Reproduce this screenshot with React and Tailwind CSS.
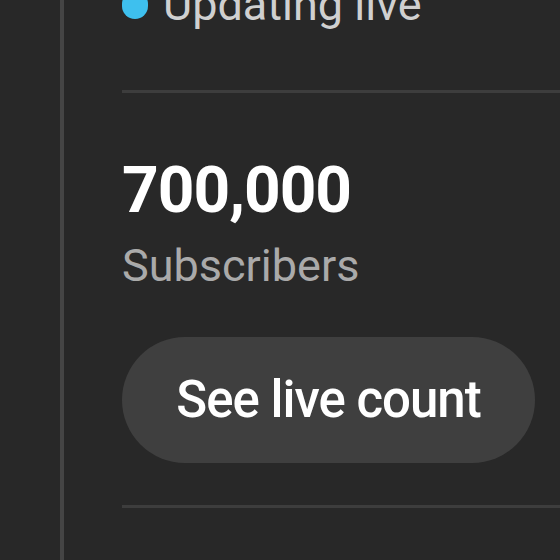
import React from "react";

export default function App() {
  return (
    <div
      className="flex h-[560px] w-[560px] overflow-hidden bg-[#282828]"
      style={{ fontFamily: "Roboto, 'Liberation Sans', sans-serif" }}
    >
      <div className="w-[60px] shrink-0" />
      <div className="w-[4px] shrink-0 bg-[#454545]" />
      <div className="flex flex-1 flex-col pl-[58px]">
        <div className="mt-[-18px] flex items-center gap-[15px]">
          <span className="h-[28px] w-[26px] rounded-full bg-[#3ec0ee]" />
          <span className="text-[45px] leading-none text-[#d0d0d0]">Updating live</span>
        </div>

        <div className="mt-[63px] h-[3px] bg-[#3d3d3d]" />

        <div className="mt-[66px] text-[64px] font-bold leading-none tracking-[-1px] text-white">
          700,000
        </div>
        <div className="mt-[20px] text-[45px] leading-none text-[#aaaaaa]">Subscribers</div>

        <div className="mt-[49px] flex">
          <button
            type="button"
            className="flex h-[126px] w-[413px] items-center justify-center rounded-full bg-[#3f3f3f] text-[51px] font-medium tracking-[-1px] text-white"
          >
            See live count
          </button>
        </div>

        <div className="mt-[42px] h-[3px] bg-[#3d3d3d]" />
      </div>
    </div>
  );
}
